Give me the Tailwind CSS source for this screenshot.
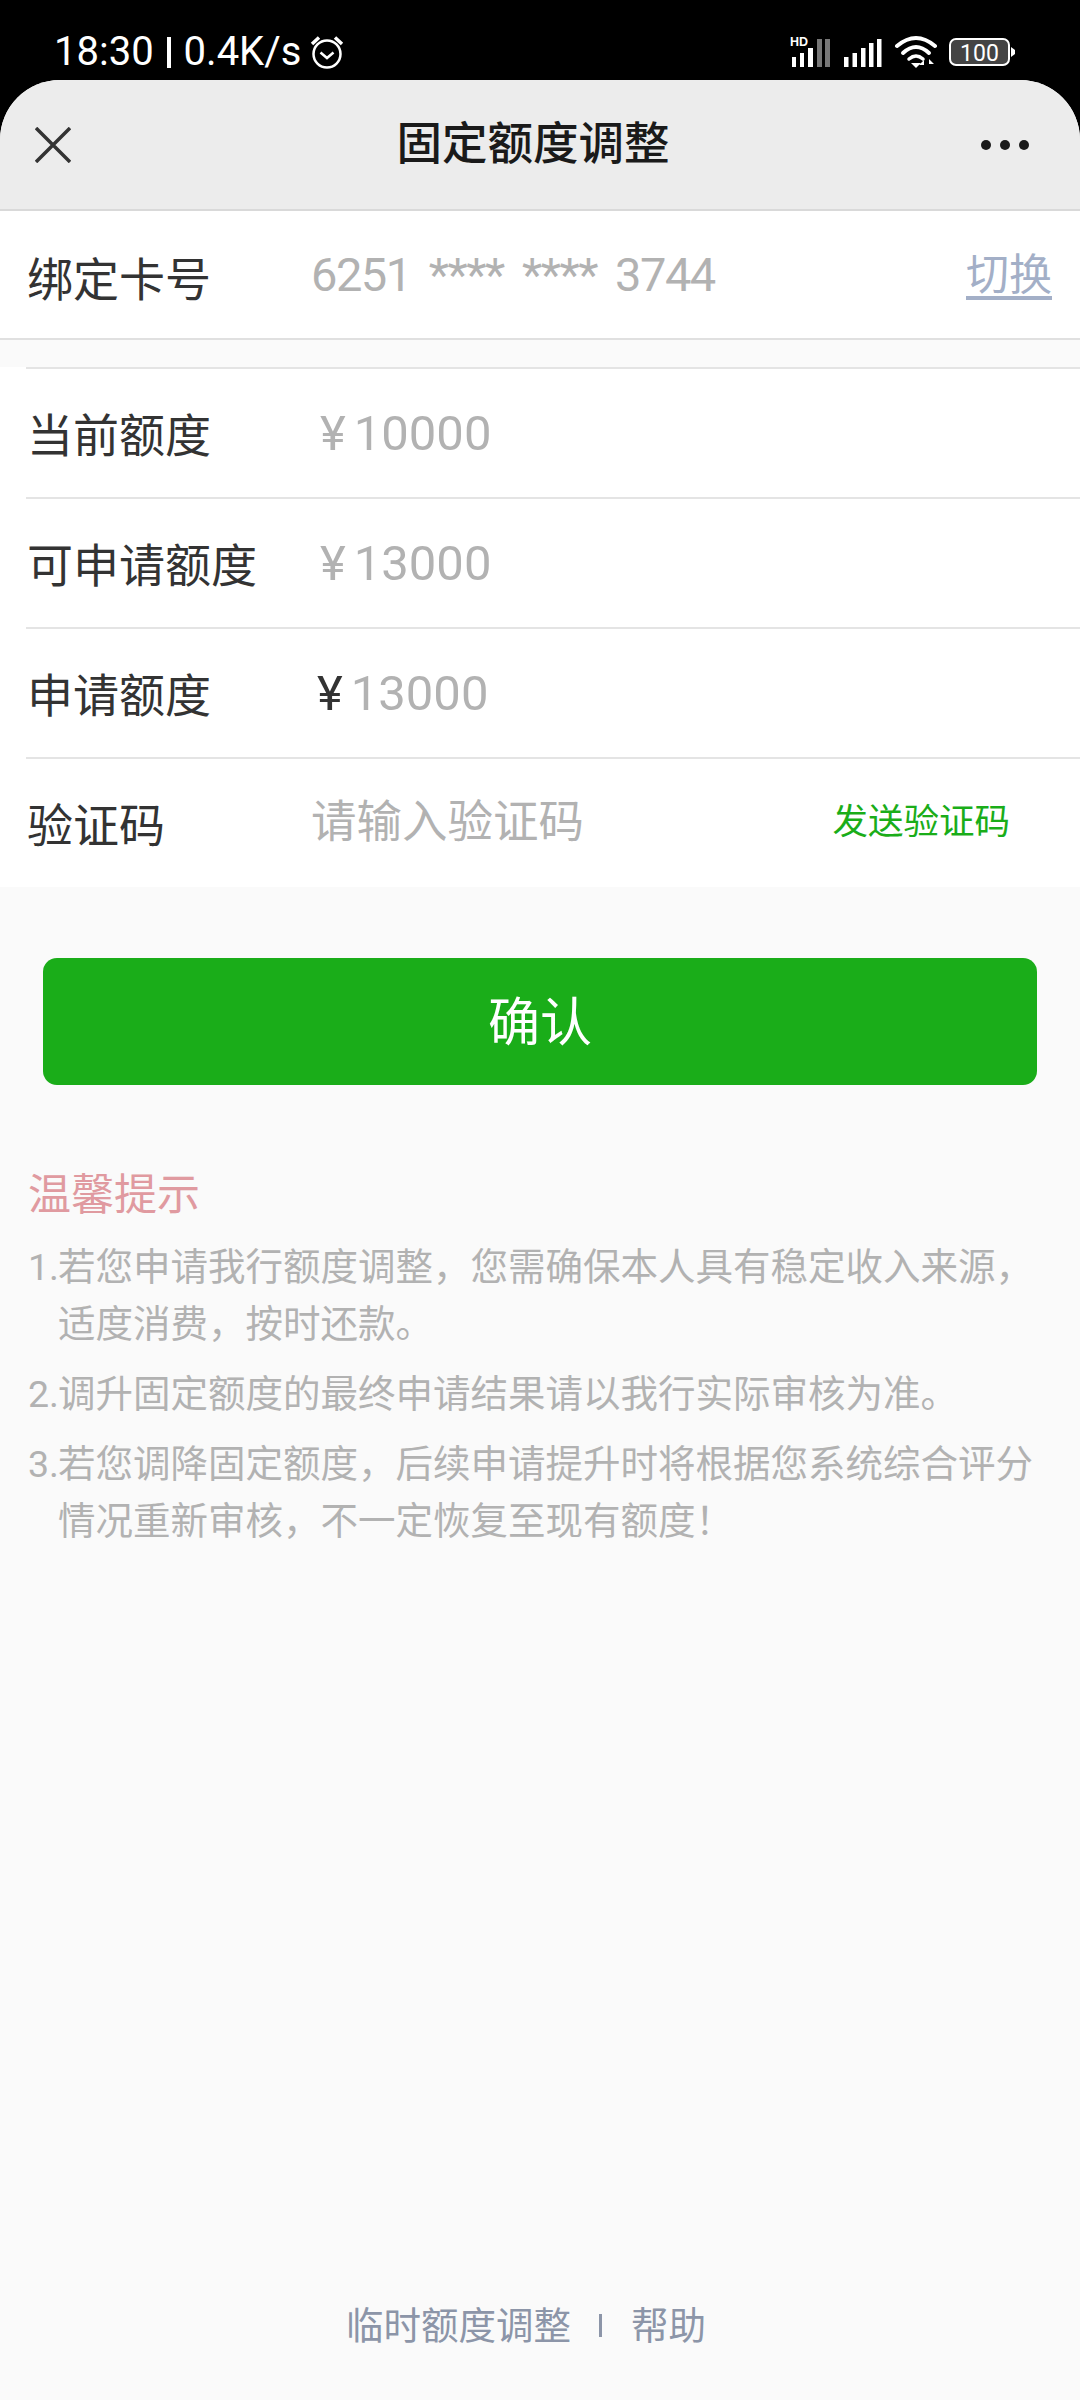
<!DOCTYPE html>
<html lang="zh-CN">
<head>
    <meta charset="UTF-8">
    <meta name="viewport" content="width=device-width, initial-scale=1.0">
    <title>固定额度调整</title>
    <script src="https://cdn.jsdelivr.net/npm/@tailwindcss/browser@4"></script>
</head>
<body class="bg-black font-['Roboto','Noto_Sans_CJK_SC',sans-serif]">
<div class="relative flex h-[2400px] w-[1080px] flex-col overflow-hidden bg-black">

    <!-- 状态栏 -->
    <div class="flex h-[80px] shrink-0 items-start justify-between pl-[54px] pr-[64px] pt-[31px] text-white">
        <div class="flex h-[42px] items-center text-[40px] leading-none">
            <span>18:30</span>
            <span class="mx-[13px] h-[31px] w-[4px] bg-white"></span>
            <span>0.4K/s</span>
            <svg class="ml-[9px]" width="34" height="36" viewBox="0 0 34 36" fill="none" stroke="white">
                <circle cx="17" cy="20" r="13.5" stroke-width="2.5"/>
                <path d="M10.500 18.500 L17 24 L23.500 18.500" stroke-width="2.500"/>
                <path d="M2 10 L9 3.500 M32 10 L25 3.500" stroke-width="3.500"/>
            </svg>
        </div>
        <div class="flex h-[42px] items-start">
            <svg width="226" height="42" viewBox="0 0 226 42" fill="white">
                <text x="0" y="15" font-family="Liberation Sans" font-size="12.500" font-weight="700">HD</text>
                <rect x="2" y="26" width="4" height="10"/>
                <rect x="10" y="22" width="4" height="14"/>
                <rect x="18" y="17" width="5" height="19"/>
                <rect x="27" y="8" width="5" height="28" fill="#777"/>
                <rect x="35" y="8" width="5" height="28" fill="#777"/>
                <rect x="54" y="26" width="4.500" height="10"/>
                <rect x="62.500" y="22" width="4.500" height="14"/>
                <rect x="71" y="17" width="4.500" height="19"/>
                <rect x="79" y="12" width="4.500" height="24"/>
                <rect x="87" y="8" width="4.500" height="28"/>
                <g fill="none" stroke="white" stroke-linecap="round">
                    <path d="M107 15 Q126 -1 145 15" stroke-width="4"/>
                    <path d="M113 22 Q126 10 139 22" stroke-width="4"/>
                    <path d="M119 28 Q126 22 133 28" stroke-width="3.500"/>
                </g>
                <path d="M121 32 L131 32 L126 37 Z"/>
                <path d="M134 38 V29 L129 34 H134 M139 38 V28 L144 33 H139"/>
                <rect x="160" y="8" width="59" height="26" rx="6" fill="#444" stroke="white" stroke-width="2"/>
                <path d="M221 16 L225 19 V23 L221 26 Z"/>
                <text x="189.500" y="30" text-anchor="middle" font-family="Roboto" font-size="23">100</text>
            </svg>
        </div>
    </div>

    <div class="flex flex-1 flex-col rounded-t-[60px] bg-[#fafafa]">
        <!-- 标题栏 -->
        <div class="flex h-[131px] shrink-0 items-center justify-between rounded-t-[60px] border-b-2 border-[#d9d9d9] bg-[#ececec] pl-[35px] pr-[51px]">
            <svg width="36" height="36" viewBox="0 0 36 36" stroke="#333" stroke-width="3.500" fill="none">
                <path d="M1 1 L35 35 M35 1 L1 35"/>
            </svg>
            <h1 class="ml-[14px] text-[45.500px] font-medium leading-none text-[#1a1a1a]">固定额度调整</h1>
            <div class="flex gap-[9px]">
                <span class="size-[10px] rounded-full bg-[#1a1a1a]"></span>
                <span class="size-[10px] rounded-full bg-[#1a1a1a]"></span>
                <span class="size-[10px] rounded-full bg-[#1a1a1a]"></span>
            </div>
        </div>

        <!-- 绑定卡号 -->
        <div class="flex h-[129px] shrink-0 items-center border-b-2 border-[#e0e0e0] bg-white pl-[27px] pr-[28px]">
            <span class="w-[284px] pt-[10px] text-[46px] leading-none text-[#333]">绑定卡号</span>
            <span class="flex-1 text-[47px] leading-none tracking-[-1.500px] text-[#b2b2b2] [word-spacing:8px]">6251 **** **** 3744</span>
            <span class="text-[43px] leading-[52px] text-[#a3afc7] underline underline-offset-[6px]">切换</span>
        </div>

        <div class="h-[27px] shrink-0"></div>

        <!-- 额度表单 -->
        <div class="flex shrink-0 flex-col bg-white pl-[26px]">
            <div class="flex h-[130px] items-center border-t-2 border-[#e4e4e4]">
                <span class="w-[294px] pl-[1px] pt-[6px] text-[46px] leading-none text-[#333]">当前额度</span>
                <span class="text-[49px] leading-none text-[#b2b2b2]"><span class="mr-[8px]">¥</span>10000</span>
            </div>
            <div class="flex h-[130px] items-center border-t-2 border-[#e4e4e4]">
                <span class="w-[294px] pl-[1px] pt-[6px] text-[46px] leading-none text-[#333]">可申请额度</span>
                <span class="text-[49px] leading-none text-[#b2b2b2]"><span class="mr-[8px]">¥</span>13000</span>
            </div>
            <div class="flex h-[130px] items-center border-t-2 border-[#e4e4e4]">
                <span class="w-[291px] pl-[1px] pt-[6px] text-[46px] leading-none text-[#333]">申请额度</span>
                <span class="text-[49px] leading-none text-[#b2b2b2]"><span class="mr-[8px] text-[#333]">¥</span>13000</span>
            </div>
            <div class="flex h-[130px] items-center border-t-2 border-[#e4e4e4] pr-[70px]">
                <span class="w-[285px] pl-[1px] pt-[6px] text-[46px] leading-none text-[#333]">验证码</span>
                <span class="flex-1 text-[45.500px] leading-none text-[#b2b2b2]">请输入验证码</span>
                <span class="text-[35.500px] leading-none text-[#1aad19]">发送验证码</span>
            </div>
        </div>

        <!-- 确认按钮 -->
        <button class="mx-[43px] mt-[71px] flex h-[127px] shrink-0 items-center justify-center rounded-[14px] bg-[#1aad19] pt-[4px] text-[52px] text-white">确认</button>

        <!-- 温馨提示 -->
        <div class="mt-[84px] px-[28px]">
            <h2 class="text-[43px] leading-[52px] text-[#e09aa0]">温馨提示</h2>
            <div class="mt-[18px] flex flex-col gap-[13px] text-[37.500px] leading-[57px] text-[#b2b2b2]">
                <div class="flex"><span class="w-[30px] shrink-0">1.</span><p>若您申请我行额度调整&#xFF0C;您需确保本人具有稳定收入来源&#xFF0C;适度消费&#xFF0C;按时还款。</p></div>
                <div class="flex"><span class="w-[30px] shrink-0">2.</span><p>调升固定额度的最终申请结果请以我行实际审核为准。</p></div>
                <div class="flex"><span class="w-[30px] shrink-0">3.</span><p>若您调降固定额度&#xFF0C;后续申请提升时将根据您系统综合评分情况重新审核&#xFF0C;不一定恢复至现有额度&#xFF01;</p></div>
            </div>
        </div>

        <!-- 底部链接 -->
        <div class="mt-auto flex h-[104px] items-start pl-[346px] pt-[5px] text-[37.500px] leading-[50px] text-[#8c95a8]">
            <span>临时额度调整</span>
            <span class="ml-[28px] mt-[13px] h-[23px] w-[3px] bg-[#8c95a8]"></span>
            <span class="ml-[29px]">帮助</span>
        </div>
    </div>
</div>
</body>
</html>
